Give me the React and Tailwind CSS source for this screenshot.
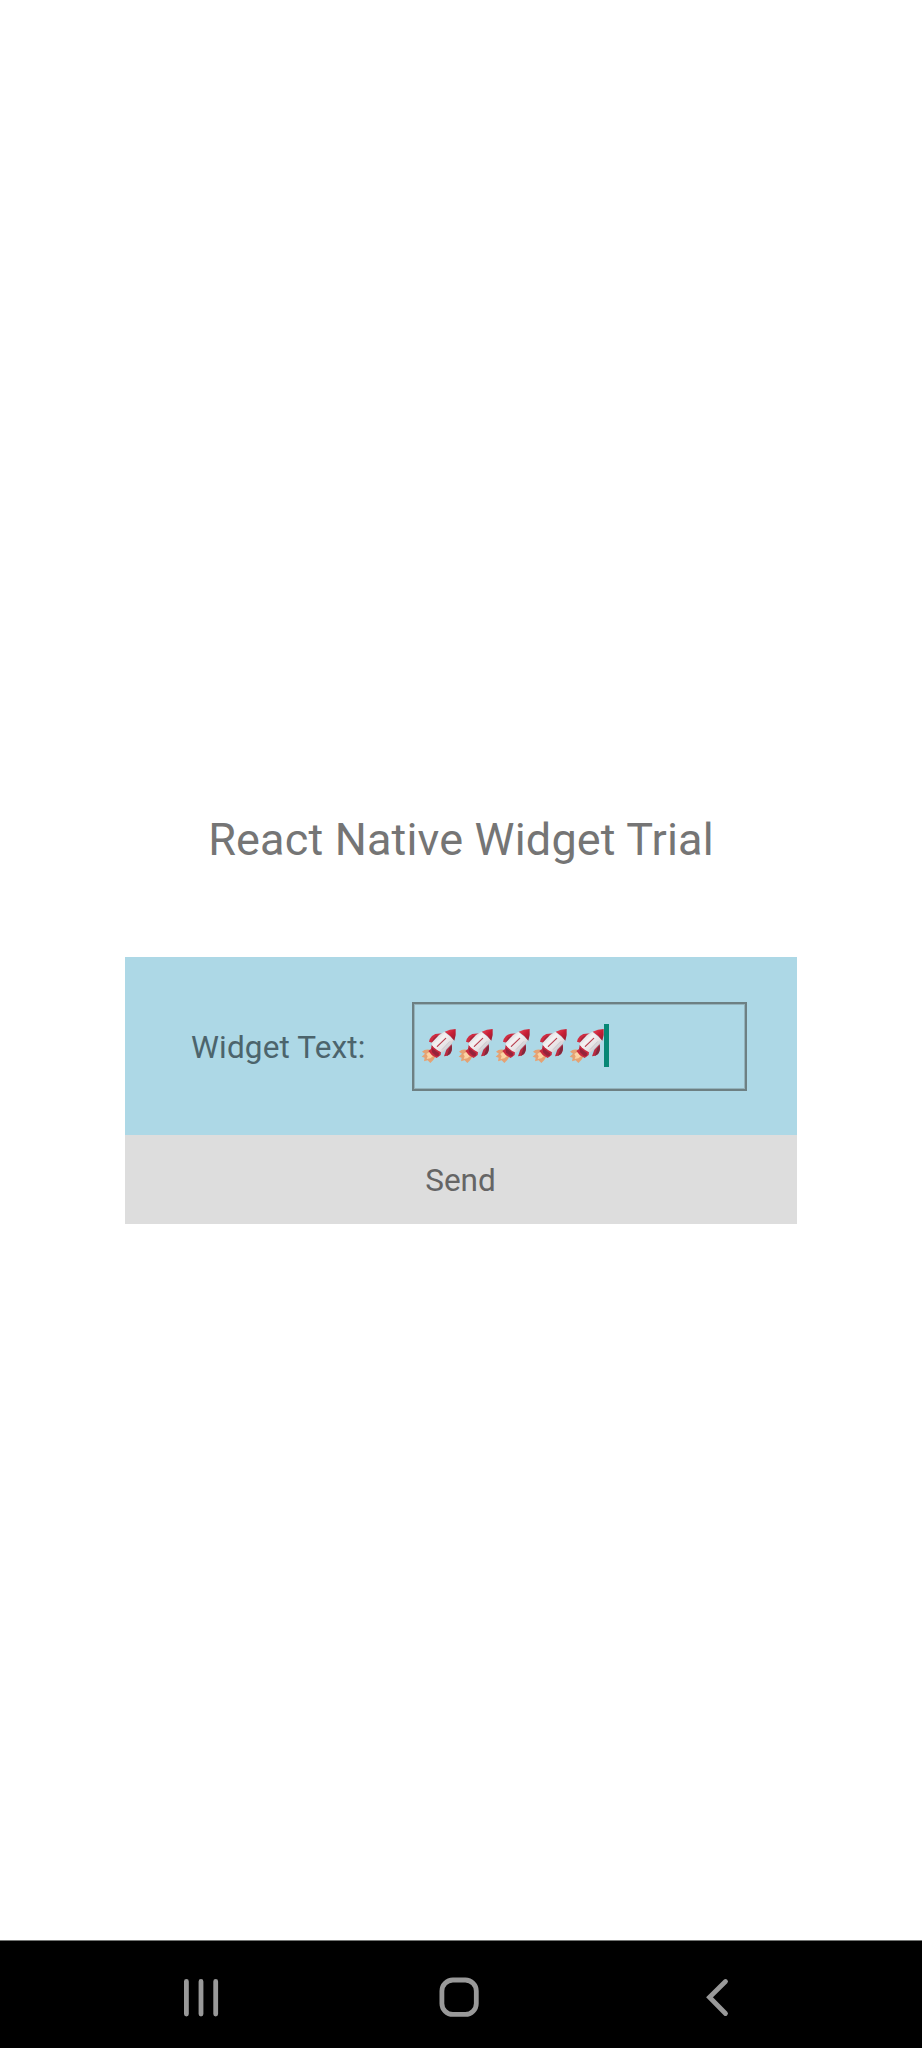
import React from "react";

function Rocket() {
  return (
    <svg viewBox="3 -12 111 138" className="h-[46px] w-[37px] shrink-0" role="img" aria-label="rocket">
      <defs>
        <linearGradient id="hull" x1="0" y1="0" x2="1" y2="1">
          <stop offset="0.1" stopColor="#c9cfd3" />
          <stop offset="0.38" stopColor="#f5f1f2" />
          <stop offset="0.62" stopColor="#e6e3e5" />
          <stop offset="1" stopColor="#a3a0a6" />
        </linearGradient>
        <linearGradient id="nose" x1="0" y1="0" x2="1" y2="1">
          <stop offset="0" stopColor="#e84b5a" />
          <stop offset="0.5" stopColor="#c81f35" />
          <stop offset="1" stopColor="#8e1c2f" />
        </linearGradient>
      </defs>
      <path d="M33 74 Q17 71 9 80 L18 86 L8 95 L17 98 L15 109 L26 106 L34 114 L43 105 L50 94 Z" fill="#e5a273" />
      <path d="M32 80 L22 87 L26 94 L23 102 L34 100 L42 94 Z" fill="#fbd3a3" />
      <path d="M70 26 Q49 24 39 33 Q32 40 30 50 L42 54 Z" fill="#cf2c41" />
      <path d="M64 30 Q50 32 44 39 L38 51 L42 54 Z" fill="#a6233a" />
      <path d="M98 57 Q101 76 93 87 Q87 94 75 94 L82 74 Z" fill="#ba2b40" />
      <path d="M98 60 Q101 77 93 87 L84 92 L91 70 Z" fill="#83283c" />
      <path d="M38 60 L46 66 L66 80 L65 90 L53 99 L39 91 L28 78 L36 72 Z" fill="#c92b40" />
      <path d="M38 68 L60 85 L59 94 L50 92 L39 82 Z" fill="#96233a" />
      <path d="M76 20 L60 30 L38 53 Q37 60 44 67 Q55 78 69 83 L74 80 L98 56 L105 45 Z" fill="url(#hull)" />
      <path d="M77 20 Q92 12 110 12 Q112 28 106 47 Q94 31 77 20 Z" fill="url(#nose)" />
      <path d="M55 64 L80 40" fill="none" stroke="#b8404f" strokeWidth="3.6" strokeLinecap="round" />
      <path d="M69 74 L93 49" fill="none" stroke="#c9c6cb" strokeWidth="3" />
    </svg>
  );
}

function NavigationBar() {
  return (
    <nav className="flex h-[108px] items-start border-t border-[#737573] bg-black">
      <svg viewBox="0 0 922 107" className="h-[107px] w-full" fill="none" stroke="#999" strokeWidth="4.8" strokeLinecap="round">
        <path d="M186.4 40.5V73M201 40.5V73M215.7 40.5V73" />
        <rect x="441.9" y="39" width="34.4" height="34.4" rx="11" />
        <path strokeLinejoin="miter" d="M725.5 40.5L709.5 56.3L725.5 72.5" />
      </svg>
    </nav>
  );
}

export default function App() {
  return (
    <div className="flex h-[2048px] w-[922px] flex-col overflow-hidden bg-white font-['Roboto',sans-serif]">
      <main className="flex flex-1 flex-col items-center pt-[813px]">
        <h1 className="h-[144px] text-[45px] leading-[54px] tracking-[0.17px] whitespace-nowrap text-[#757575]">
          React Native Widget Trial
        </h1>
        <section className="flex w-[672px] flex-col">
          <div className="flex h-[178px] items-center bg-[#add8e6] pr-[50px] pl-[66px]">
            <label className="w-[221px] pt-[3px] text-[31.5px] leading-[38px] tracking-[0.15px] whitespace-nowrap text-[#4c646c]">
              Widget Text:
            </label>
            <div className="mt-px flex h-[89px] w-[335px] items-center border-2 border-[#6d8083] pb-[2px] pl-[6px] shadow-[inset_0_0_0_1px_#94b3bc]">
              <div className="flex h-[49px] items-start">
                <Rocket />
                <Rocket />
                <Rocket />
                <Rocket />
                <Rocket />
              </div>
              <span className="-ml-px h-[43px] w-[5px] bg-[#078775]" />
            </div>
          </div>
          <button className="flex h-[89px] items-center justify-center bg-[#dddddd] pt-[2px] pr-px text-[31.5px] leading-[38px] text-[#656565]">
            Send
          </button>
        </section>
      </main>
      <NavigationBar />
    </div>
  );
}
